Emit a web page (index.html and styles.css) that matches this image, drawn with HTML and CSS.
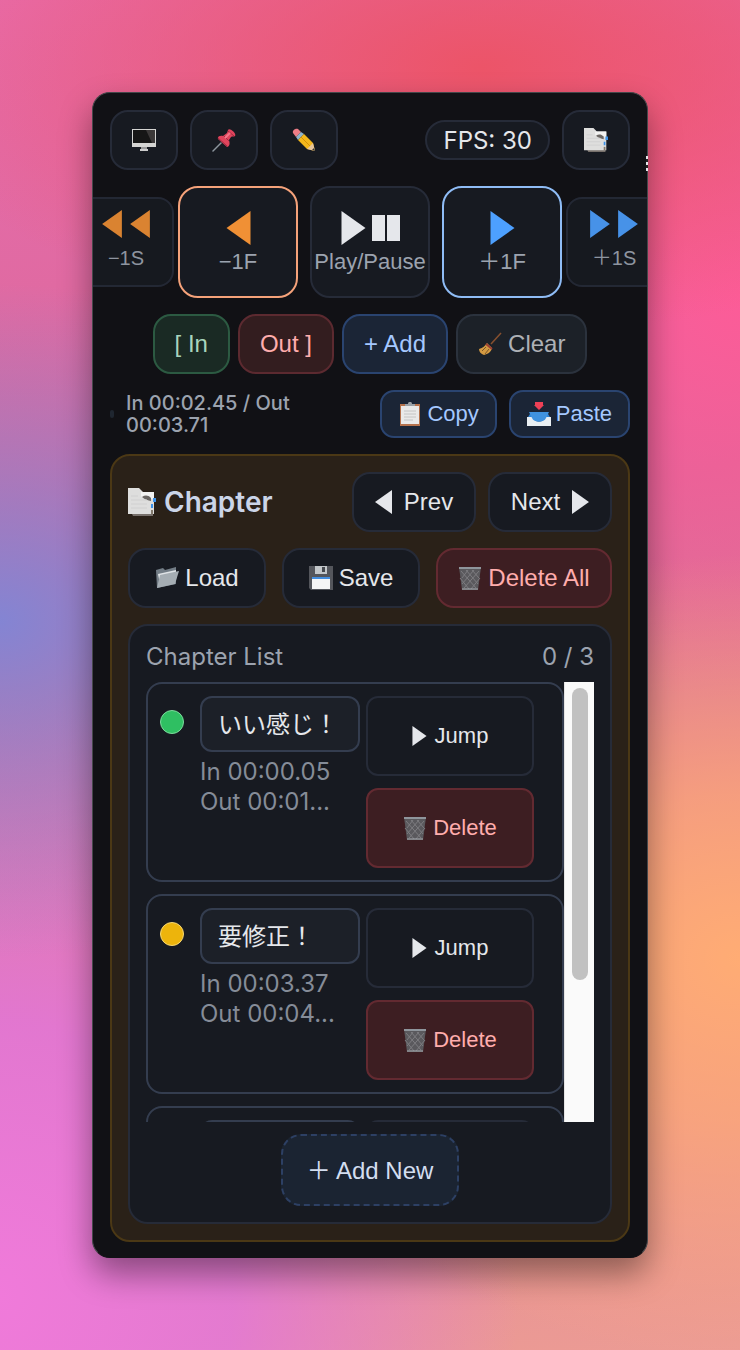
FILE: index.html
```
<!DOCTYPE html>
<html lang="en">
<head>
    <meta charset="UTF-8">
    <meta name="viewport" content="width=device-width, initial-scale=1.0">
    <title>Chapter Remote</title>
    <link rel="stylesheet" href="styles.css">
</head>
<body>
    <!-- Icon sprite -->
    <svg class="sprite" width="0" height="0" aria-hidden="true">
        <symbol id="i-left" viewBox="0 0 24 34"><path d="M24 0v34L0 17z" fill="currentColor"/></symbol>
        <symbol id="i-right" viewBox="0 0 24 34"><path d="M0 0v34l24-17z" fill="currentColor"/></symbol>
        <symbol id="i-pause" viewBox="0 0 28 26"><path d="M0 0h13v26H0zM15 0h13v26H15z" fill="currentColor"/></symbol>
        <symbol id="i-monitor" viewBox="0 0 24 24">
            <path d="M0 1h24v18H0z" fill="#d4d4d2"/>
            <path d="M1 2h22v13H1z" fill="#161616"/>
            <path d="M14 2h9v13h-3z" fill="#3b3838"/>
            <path d="M9 19h6v2H9z" fill="#999"/>
            <path d="M8 21h8v2H8z" fill="#ccc"/>
        </symbol>
        <symbol id="i-pin" viewBox="0 0 24 24">
            <path d="M9 15 1 23" stroke="#8d969e" stroke-width="1.5" stroke-linecap="round"/>
            <path d="M16 2c1-3 9 3 7 6-1 1-3 0-4 1l-2 3c1 3 1 6-2 7L6 11c-1-3 3-4 5-3l4-3z" fill="#e0445c"/>
            <path d="m6 10 9 8M12 8l5 5M16 3l6 5" stroke="#a02a40" stroke-width="1" fill="none"/>
            <path d="m13 10 5-5" stroke="#f4778a" stroke-width="2"/>
        </symbol>
        <symbol id="i-pencil" viewBox="0 0 24 24">
            <path d="M1 5c-1-2 2-5 5-4l3 3-5 5z" fill="#ee7d86"/>
            <path d="m4 9 5-5 3 2-6 6z" fill="#8fb4cc"/>
            <path d="m6 12 6-6 9 9 2 8-8-2z" fill="#f4b71b"/>
            <path d="m9 9 9 9" stroke="#d59108" stroke-width="1"/>
            <path d="m15 21 6-6 2 8z" fill="#e8c59a"/>
            <path d="m20 22 2-2 1 3z" fill="#333"/>
        </symbol>
        <symbol id="i-tabs" viewBox="0 0 28 28">
            <path d="M3 24h22v4H5z" fill="#77706b"/>
            <path d="M0 0h11l4 4h11v22H0z" fill="#dededd"/>
            <path d="M13 4h13v7H17l-4-3z" fill="#f2f2f1"/>
            <path d="M14 9c3-2 6-2 9 1v3c-3-1-6-1-9-4z" fill="#6b6764"/>
            <path d="M25 10h3v4h-3zM23 16h2v4h-2z" fill="#3d92e8"/>
            <path d="M23 22h2v4h-2z" fill="#82796c"/>
            <path d="M3 8h7M3 12h16M3 16h16M3 20h16" stroke="#d0d0d0"/>
        </symbol>
        <symbol id="i-broom" viewBox="0 0 24 24">
            <path d="M23 1 13 12" stroke="#87502f" stroke-width="1.5"/>
            <path d="m9 11 5 5c-1 4-4 6-8 7-3-1-5-3-5-6 4-1 6-3 8-6z" fill="#d39a42"/>
            <path d="m8 12 6 5" stroke="#9c4034" stroke-width="2"/>
            <path d="m8 15-4 4m7-2-4 5" stroke="#7b5627"/>
        </symbol>
        <symbol id="i-clipboard" viewBox="0 0 24 24">
            <path d="M2 2h20v22H2z" fill="#b4714c"/>
            <path d="M3 4h18v18H3z" fill="#e9e9e9"/>
            <path d="M7 4V2h3c0-3 4-3 4 0h3v2z" fill="#9aa0a6"/>
            <path d="M6 9h12M6 12h12M6 15h12M6 18h9" stroke="#c4c4c4"/>
        </symbol>
        <symbol id="i-inbox" viewBox="0 0 24 24">
            <path d="M4 10h16l4 7H0z" fill="#2f83d4"/>
            <path d="M0 15h6c1 6 11 6 12 0h6v9H0z" fill="#e9eef2"/>
            <path d="M2 10h20l-3 6c-2 5-12 5-14 0z" fill="#3f92df"/>
            <path d="M8 0h8v3h1l-5 5-5-5h1z" fill="#ee4056"/>
        </symbol>
        <symbol id="i-folder" viewBox="0 0 24 24">
            <path d="M1 4 8 2l2 2 11-3v17L2 22z" fill="#737d86"/>
            <path d="m3 8 18-4v6L5 18z" fill="#dfe3e6"/>
            <path d="m5 9 19-4-4 13-18 4z" fill="#a5adb3"/>
        </symbol>
        <symbol id="i-floppy" viewBox="0 0 24 24">
            <path d="M0 0h24v24H2l-2-2z" fill="#54565c"/>
            <path d="M6 0h12v8H6z" fill="#c3c7ca"/>
            <path d="M13 1h3v5h-3z" fill="#45484e"/>
            <path d="M3 11h18v12H3z" fill="#f5f5f5"/>
            <path d="M3 11h18v2H3z" fill="#438ee0"/>
        </symbol>
        <symbol id="i-trash" viewBox="0 0 24 24">
            <path d="M1 1h22l-3 23H4z" fill="#5a595d"/>
            <path d="m3 5 15 17M8 4l12 14M14 4l7 8M2 12l9 11M21 5 6 22M16 4 4 18M10 4l-6 8M22 12 13 23" stroke="#7d7c80"/>
            <path d="M1 2h22" stroke="#8f959c" stroke-width="2"/>
            <path d="M4 23h16" stroke="#a9adb2" stroke-width="1"/>
        </symbol>
    </svg>

    <main class="panel">
        <span class="drag-handle"></span>

        <div class="toolbar">
            <button class="btn btn-icon" aria-label="Display"><svg class="icon"><use href="#i-monitor"/></svg></button>
            <button class="btn btn-icon" aria-label="Pin"><svg class="icon"><use href="#i-pin"/></svg></button>
            <button class="btn btn-icon" aria-label="Edit"><svg class="icon"><use href="#i-pencil"/></svg></button>
            <span class="fps">FPS: 30</span>
            <button class="btn btn-icon" aria-label="Chapters"><svg class="icon"><use href="#i-tabs"/></svg></button>
        </div>

        <div class="transport">
            <button class="key key-small back">
                <span class="key-icons"><svg class="arrow"><use href="#i-left"/></svg><svg class="arrow"><use href="#i-left"/></svg></span>
                −1S
            </button>
            <button class="key back key-back">
                <span class="key-icons"><svg class="arrow"><use href="#i-left"/></svg></span>
                −1F
            </button>
            <button class="key">
                <span class="key-icons"><svg class="arrow"><use href="#i-right"/></svg><svg class="pause"><use href="#i-pause"/></svg></span>
                Play/Pause
            </button>
            <button class="key forward key-forward">
                <span class="key-icons"><svg class="arrow"><use href="#i-right"/></svg></span>
                ＋1F
            </button>
            <button class="key key-small forward">
                <span class="key-icons"><svg class="arrow"><use href="#i-right"/></svg><svg class="arrow"><use href="#i-right"/></svg></span>
                ＋1S
            </button>
        </div>

        <div class="marks">
            <button class="btn btn-green">[ In</button>
            <button class="btn btn-red">Out ]</button>
            <button class="btn btn-blue">+ Add</button>
            <button class="btn btn-muted"><svg class="icon"><use href="#i-broom"/></svg>Clear</button>
        </div>

        <div class="range">
            <span class="range-dot"></span>
            <p class="range-text">In 00:02.45 / Out 00:03.71</p>
            <button class="btn btn-blue btn-short"><svg class="icon"><use href="#i-clipboard"/></svg>Copy</button>
            <button class="btn btn-blue btn-short"><svg class="icon"><use href="#i-inbox"/></svg>Paste</button>
        </div>

        <section class="chapter">
            <div class="chapter-header">
                <h1><svg class="icon icon-large"><use href="#i-tabs"/></svg>Chapter</h1>
                <button class="btn btn-nav"><svg class="play"><use href="#i-left"/></svg>Prev</button>
                <button class="btn btn-nav">Next<svg class="play"><use href="#i-right"/></svg></button>
            </div>

            <div class="chapter-files">
                <button class="btn"><svg class="icon"><use href="#i-folder"/></svg>Load</button>
                <button class="btn"><svg class="icon"><use href="#i-floppy"/></svg>Save</button>
                <button class="btn btn-delete"><svg class="icon"><use href="#i-trash"/></svg>Delete All</button>
            </div>

            <div class="list-box">
                <div class="list-header">
                    <h2>Chapter List</h2>
                    <span>0 / 3</span>
                </div>

                <div class="list-scroll">
                    <ul class="list">
                        <li class="card">
                            <span class="dot dot-green"></span>
                            <div class="card-info">
                                <input class="card-title" type="text" value="いい感じ！" aria-label="Chapter title">
                                <p>In 00:00.05</p>
                                <p>Out 00:01...</p>
                            </div>
                            <div class="card-actions">
                                <button class="btn btn-card"><svg class="play"><use href="#i-right"/></svg>Jump</button>
                                <button class="btn btn-card btn-delete"><svg class="icon"><use href="#i-trash"/></svg>Delete</button>
                            </div>
                        </li>
                        <li class="card">
                            <span class="dot dot-yellow"></span>
                            <div class="card-info">
                                <input class="card-title" type="text" value="要修正！" aria-label="Chapter title">
                                <p>In 00:03.37</p>
                                <p>Out 00:04...</p>
                            </div>
                            <div class="card-actions">
                                <button class="btn btn-card"><svg class="play"><use href="#i-right"/></svg>Jump</button>
                                <button class="btn btn-card btn-delete"><svg class="icon"><use href="#i-trash"/></svg>Delete</button>
                            </div>
                        </li>
                        <li class="card">
                            <span class="dot"></span>
                            <div class="card-info">
                                <input class="card-title" type="text" aria-label="Chapter title">
                            </div>
                            <div class="card-actions">
                                <button class="btn btn-card" aria-label="Jump"></button>
                            </div>
                        </li>
                    </ul>
                    <div class="scrollbar"><div class="scrollbar-thumb"></div></div>
                </div>

                <button class="btn btn-new">＋ Add New</button>
            </div>
        </section>
    </main>
</body>
</html>
```
FILE: styles.css
```
* {
    margin: 0;
    padding: 0;
    box-sizing: border-box;
}

body {
    min-height: 100vh;
    padding: 92px;
    font-family: Inter, "Noto Sans CJK JP", sans-serif;
    color: #e5e7eb;
    background:
        radial-gradient(ellipse 60% 25% at 0% 46%, rgba(127, 134, 214, 0.95) 0%, rgba(127, 134, 214, 0.5) 45%, rgba(127, 134, 214, 0) 100%),
        radial-gradient(ellipse 65% 30% at 100% 71%, #ffac74 0%, rgba(255, 172, 116, 0.7) 40%, rgba(255, 172, 116, 0) 100%),
        radial-gradient(ellipse 80% 20% at 65% 5%, #ec5468 0%, rgba(236, 84, 104, 0) 100%),
        radial-gradient(ellipse 60% 30% at 100% 22%, #fc5c98 0%, rgba(252, 92, 152, 0) 100%),
        radial-gradient(ellipse 70% 45% at 0% 96%, #f07ada 0%, rgba(226, 116, 222, 0.8) 45%, rgba(226, 116, 222, 0) 100%),
        linear-gradient(170deg, #e86cac 0%, #d86898 40%, #ec9c94 100%);
}

.sprite {
    position: absolute;
}

.panel {
    position: relative;
    display: flex;
    flex-direction: column;
    gap: 16px;
    padding: 17px 17px 15px;
    background: #111115;
    border: 1px solid #45474a;
    border-bottom-color: #111115;
    border-radius: 18px;
    box-shadow: 0 16px 32px rgba(0, 0, 0, 0.4);
}

.drag-handle {
    position: absolute;
    top: 63px;
    right: -1px;
    width: 2px;
    height: 15px;
    background: repeating-linear-gradient(#e5e7eb 0 3px, #222 3px 6px);
}

/* Buttons */
.btn {
    display: flex;
    align-items: center;
    justify-content: center;
    gap: 6px;
    height: 60px;
    color: #e5e7eb;
    background: #171a21;
    border: 2px solid #262b38;
    border-radius: 18px;
    font: 24px "Liberation Sans", "Noto Sans CJK JP", sans-serif;
    white-space: nowrap;
    cursor: pointer;
}

.btn-icon {
    width: 68px;
}

.btn-green {
    color: #a8d5bc;
    background: #1a2a24;
    border-color: #2c5a42;
}

.btn-red {
    color: #ffadad;
    background: #331d1f;
    border-color: #5c2a30;
}

.btn-blue {
    color: #a5c8ff;
    background: #1b2536;
    border-color: #2a4470;
}

.btn-muted {
    color: #aeb1b6;
    background: #1c2128;
    border-color: #2b323d;
}

.btn-delete {
    color: #ffadad;
    background: #3d1e22;
    border-color: #632a31;
}

.btn-short {
    height: 48px;
    padding: 0 16px;
    gap: 5px;
    border-radius: 14px;
    font-size: 22px;
}

.icon {
    width: 24px;
    height: 24px;
    flex-shrink: 0;
}

.icon-large {
    width: 28px;
    height: 28px;
}

.play {
    width: 17px;
    height: 24px;
}

/* Top toolbar */
.toolbar {
    display: flex;
    align-items: center;
    gap: 12px;
}

.fps {
    margin-left: auto;
    height: 40px;
    padding: 0 16px;
    line-height: 38px;
    font-size: 24px;
    background: #171a21;
    border: 2px solid #262b38;
    border-radius: 20px;
}

/* Transport keys, the outer two run off the panel */
.transport {
    display: flex;
    align-items: center;
    justify-content: center;
    gap: 12px;
    margin: 0 -17px;
    overflow: hidden;
}

.key {
    display: flex;
    flex-direction: column;
    align-items: center;
    justify-content: center;
    flex-shrink: 0;
    width: 120px;
    height: 112px;
    color: #9ca3af;
    background: #171a21;
    border: 2px solid #262b38;
    border-radius: 20px;
    font: 22px/28px "Liberation Sans", "Noto Sans CJK JP", sans-serif;
    white-space: nowrap;
    cursor: pointer;
}

.key-icons {
    display: flex;
    align-items: center;
    justify-content: center;
    gap: 6px;
    height: 40px;
    color: #e5e7eb;
}

.arrow {
    width: 25px;
    height: 34px;
}

.pause {
    width: 28px;
    height: 26px;
}

.back .key-icons {
    color: #f09035;
}

.forward .key-icons {
    color: #4da0ff;
}

.key-back {
    margin-left: -8px;
    border-color: #f5a27a;
}

.key-forward {
    margin-right: -8px;
    border-color: #8fbcf5;
}

.key-small {
    width: 96px;
    height: 90px;
    padding-bottom: 8px;
    border-radius: 16px;
    font-size: 20px;
    opacity: 0.9;
}

.key-small .key-icons {
    gap: 8px;
}

.key-small .arrow {
    width: 20px;
    height: 28px;
}

/* In / out marks */
.marks {
    display: flex;
    justify-content: center;
    gap: 8px;
}

.marks .btn {
    padding: 0 20px;
}

.range {
    display: flex;
    align-items: center;
    gap: 12px;
}

.range-dot {
    width: 4px;
    height: 8px;
    background: #1f2630;
    border-radius: 2px;
}

.range-text {
    flex: 1;
    padding-right: 60px;
    color: #9ca3af;
    font-size: 20px;
    font-weight: 500;
    line-height: 22px;
}

/* Chapter section */
.chapter {
    display: flex;
    flex-direction: column;
    gap: 16px;
    padding: 16px;
    background: #2a2118;
    border: 2px solid #4b3815;
    border-radius: 20px;
}

.chapter-header {
    display: flex;
    align-items: center;
    gap: 12px;
}

h1 {
    display: flex;
    align-items: center;
    gap: 8px;
    flex: 1;
    color: #cbd5e8;
    font-size: 28px;
    font-weight: 600;
}

.btn-nav {
    gap: 12px;
    width: 124px;
}

.chapter-files {
    display: grid;
    grid-template-columns: 1fr 1fr 176px;
    gap: 16px;
}

.list-box {
    padding: 16px;
    background: #171a21;
    border: 2px solid #262b38;
    border-radius: 20px;
}

.list-header {
    display: flex;
    justify-content: space-between;
    margin-bottom: 10px;
    color: #9ca3af;
    font-size: 24px;
    line-height: 30px;
}

h2 {
    font-size: 24px;
    font-weight: 400;
}

.list-scroll {
    display: flex;
    height: 440px;
}

.list {
    flex: 1;
    overflow: hidden;
    list-style: none;
}

.scrollbar {
    width: 30px;
    padding: 6px 7px;
    background: #fafafa;
    border-left: 1px solid #e4e4e4;
}

.scrollbar-thumb {
    width: 16px;
    height: 292px;
    background: #c1c1c1;
    border-radius: 8px;
}

.card {
    display: flex;
    height: 200px;
    margin-bottom: 12px;
    padding: 12px;
    border: 2px solid #343d4f;
    border-radius: 16px;
}

.dot {
    width: 24px;
    height: 24px;
    margin: 14px 16px 0 0;
    border-radius: 50%;
}

.dot-green {
    background: #2fbf62;
    border: 1px solid #7ddb9d;
}

.dot-yellow {
    background: #edb40c;
    border: 1px solid #f7d774;
}

.card-info {
    width: 160px;
    margin-right: 6px;
    color: #858c98;
    font-size: 24px;
    line-height: 30px;
}

.card-title {
    width: 100%;
    height: 56px;
    margin-bottom: 5px;
    padding: 0 16px 4px;
    color: #e5e7eb;
    background: #1c2028;
    border: 2px solid #343d4f;
    border-radius: 12px;
    font: 24px "Liberation Sans", "Noto Sans CJK JP", sans-serif;
    vertical-align: top;
}

.card-actions {
    display: flex;
    flex-direction: column;
    gap: 12px;
    width: 168px;
}

.btn-card {
    height: 80px;
    border-radius: 12px;
    font-size: 22px;
}

.btn-card .play {
    width: 15px;
    height: 20px;
    margin-right: 2px;
}

.btn-new {
    height: 72px;
    margin: 12px auto 0;
    padding: 0 24px 4px;
    color: #d3def0;
    background: #1b2432;
    border: 2px dashed #2d4064;
    border-radius: 20px;
}
```
